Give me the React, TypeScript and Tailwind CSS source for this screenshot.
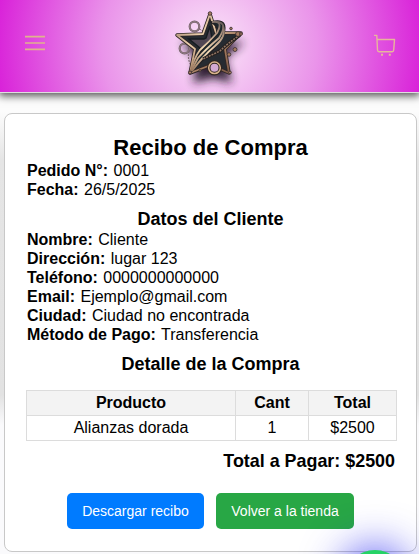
import React from "react";

const customer: [string, string][] = [
  ["Nombre:", "Cliente"],
  ["Dirección:", "lugar 123"],
  ["Teléfono:", "0000000000000"],
  ["Email:", "Ejemplo@gmail.com"],
  ["Ciudad:", "Ciudad no encontrada"],
  ["Método de Pago:", "Transferencia"],
];

function Field({ label, value }: { label: string; value: string }) {
  return (
    <p className="h-[19px] whitespace-nowrap text-base leading-[19px]">
      <strong className="mr-px font-bold">{label}</strong> {value}
    </p>
  );
}

function StarLogo() {
  return (
    <svg width="84" height="84" viewBox="0 0 84 84" fill="none" className="overflow-visible">
      <defs>
        <linearGradient id="gold" x1="0" y1="0" x2="1" y2="1">
          <stop offset="0" stopColor="#8d6d58" />
          <stop offset=".35" stopColor="#ecd0ae" />
          <stop offset=".65" stopColor="#a57c60" />
          <stop offset="1" stopColor="#6d4c3d" />
        </linearGradient>
        <linearGradient id="ribbon" x1="20" y1="69" x2="56" y2="18" gradientUnits="userSpaceOnUse">
          <stop offset="0" stopColor="#8a664f" />
          <stop offset=".45" stopColor="#f3d9b4" />
          <stop offset=".8" stopColor="#b09480" />
          <stop offset="1" stopColor="#5b5155" />
        </linearGradient>
        <filter id="shade" x="-40%" y="-40%" width="180%" height="190%">
          <feGaussianBlur stdDeviation="5" />
        </filter>
      </defs>
      <path d="M41 12 49 30 73 30 54 46 61 71 42 66 22 71 26 47 10 31 33 30Z" transform="translate(2 8)" fill="#25152c" opacity=".95" filter="url(#shade)" />
      <g stroke="#6d5b63" strokeWidth="2.2">
        <circle cx="25.5" cy="22.5" r="4.8" />
        <circle cx="15.5" cy="44.5" r="4.8" />
      </g>
      <g stroke="#ab929a" strokeWidth=".8">
        <circle cx="25.5" cy="22.5" r="4.8" />
        <circle cx="15.5" cy="44.5" r="4.8" />
      </g>
      <path d="M30 25 37 28M20 47Q18 56 23 63" stroke="#806b75" strokeWidth="1.2" strokeDasharray="2 1" />
      <path d="M41 10 47 29 72 29 56 45 60 69 42 61 21 69 26 45 8 31 34 30Z" fill="#262b31" stroke="#2e2524" strokeWidth="3.5" strokeLinejoin="round" />
      <path d="M41 10 47 29 72 29 56 45 60 69 42 61 21 69 26 45 8 31 34 30Z" stroke="url(#gold)" strokeWidth="1.8" strokeLinejoin="round" />
      <path d="M41 22 37 34 35 35 20 35 31 44 27 58 36 45 43 35Z" fill="#514653" stroke="#171c21" strokeWidth="1.5" />
      <path d="M42 18Q61 13 54 33L43 47 23 67Q28 48 41 37Q52 28 46 21Z" fill="#1d262b" stroke="#211f22" strokeWidth="1.5" />
      <g stroke="url(#ribbon)" strokeWidth="1.8">
        <path d="M43 18Q55 16 48 29Q41 37 31 46Q25 54 22 67" />
        <path d="M47 18Q60 18 50 34Q37 45 29 54L22 67" />
        <path d="M54 22Q58 32 46 42Q34 52 23 67" />
      </g>
      <path d="M71 31Q59 39 51 47L34 55" stroke="#24201f" strokeWidth="3.4" />
      <path d="M71 31Q59 39 51 47L34 55" stroke="#947765" strokeWidth="1.5" strokeDasharray="2 1" />
      <circle cx="45.5" cy="63.8" r="5.8" fill="#d3a9d2" stroke="#302520" strokeWidth="3.6" />
      <circle cx="45.5" cy="63.8" r="5.8" stroke="#d8b28c" strokeWidth="1.5" />
      <g fill="#a77b60" stroke="#392d31" strokeWidth=".8">
        <circle cx="41" cy="9.5" r="1.8" />
        <circle cx="62" cy="24.5" r="1.3" />
        <circle cx="69" cy="30" r="2.4" />
        <circle cx="72" cy="30" r="1.4" />
        <circle cx="66" cy="45.5" r="2" />
        <circle cx="60" cy="50.5" r="1.8" />
        <circle cx="21" cy="68.5" r="1.5" />
        <circle cx="31" cy="66.5" r="1" />
        <circle cx="61" cy="68.5" r="1.4" />
      </g>
    </svg>
  );
}

export default function App() {
  return (
    <div className="relative h-[554px] w-[419px] overflow-hidden bg-[linear-gradient(to_bottom,#fcfcfc_112px,#e5e5e5_160px,#e2e2e2_395px,#fafafc_425px)] font-['Liberation_Sans',Arial,sans-serif] text-black">
      <header className="relative flex h-[93px] items-start justify-between border-b border-[#dfdedf] bg-[radial-gradient(circle_at_50%_50%,#fae6f8_0%,#ea94ea_50%,#d922d9_100%)] pl-6 pr-[21px] shadow-[0_2px_8px_1px_#555]">
        <svg width="22" height="18" viewBox="0 0 22 18" className="mt-[35px]" stroke="#dfb38d" strokeWidth="1.7">
          <path d="M1 1.7h20M1 8h20M1 14.3h20" />
        </svg>
        <div className="ml-px mt-[4px]"><StarLogo /></div>
        <svg width="24" height="24" viewBox="0 0 24 24" className="mt-[34px]" stroke="#e8b59c" strokeWidth="1.4" fill="none" strokeLinejoin="round">
          <path d="M0 1.4h2.8l.7 14.6q.1 1.8 1.5 1.8h13.2q1.4 0 1.5-1.8l.8-10.5H3.2" />
          <path d="M7 20.8h2M14.8 20.8h2" strokeWidth="2" />
        </svg>
      </header>
      <main className="relative ml-1 mt-5 flex h-[439px] w-[413px] flex-col rounded-lg border border-[#c8c8c8] bg-white px-[22px]">
        <h1 className="mt-5 text-center text-[22px] font-bold leading-[27px]">Recibo de Compra</h1>
        <Field label="Pedido N°:" value="0001" />
        <Field label="Fecha:" value="26/5/2025" />
        <h2 className="mt-[9px] text-center text-lg font-bold leading-[22px]">Datos del Cliente</h2>
        {customer.map(([label, value]) => <Field key={label} label={label} value={value} />)}
        <h2 className="mt-[9px] text-center text-lg font-bold leading-[22px]">Detalle de la Compra</h2>
        <table className="-ml-px mt-[15px] w-[371px] table-fixed border-collapse text-center text-base leading-6">
          <colgroup><col className="w-[209px]" /><col className="w-[73px]" /><col className="w-[88px]" /></colgroup>
          <thead>
            <tr className="h-[25px] bg-[#f3f3f3]">
              {["Producto", "Cant", "Total"].map((t) => <th key={t} className="border border-[#dcdcdc] p-0 font-bold">{t}</th>)}
            </tr>
          </thead>
          <tbody>
            <tr className="h-[25px]">
              {["Alianzas dorada", "1", "$2500"].map((t) => <td key={t} className="border border-[#dcdcdc] p-0">{t}</td>)}
            </tr>
          </tbody>
        </table>
        <p className="-mr-px mt-[10px] text-right text-[17.9px] font-bold leading-5">Total a Pagar: $2500</p>
        <div className="mt-[22px] flex justify-center gap-3 text-sm text-white">
          <button className="h-9 w-[137px] rounded-[5px] bg-[#007bff]">Descargar recibo</button>
          <button className="h-9 w-[138px] rounded-[5px] bg-[#28a745]">Volver a la tienda</button>
        </div>
      </main>
      <div className="absolute left-[345px] top-[550px] size-[60px] rounded-full bg-[#25d366] shadow-[0_0_40px_4px_rgba(30,30,240,0.7)]" />
    </div>
  );
}
